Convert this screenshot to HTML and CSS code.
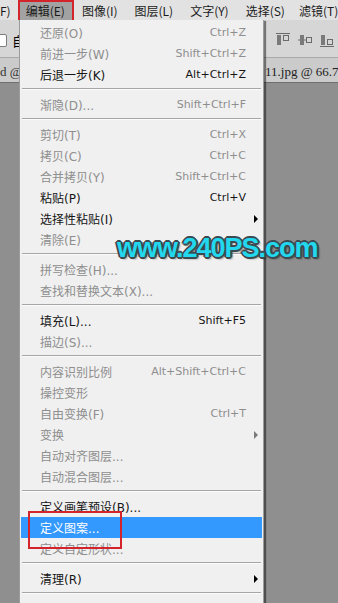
FILE: index.html
```html
<!DOCTYPE html>
<html lang="zh-CN">
<head>
  <meta charset="UTF-8">
  <meta name="viewport" content="width=device-width, initial-scale=1.0">
  <title>编辑菜单</title>
  <link rel="stylesheet" href="styles.css">
</head>
<body>
  <div class="app">
    <div class="menubar">
      <span class="mb-item mb-first">F)</span>
      <span class="mb-item mb-active">编辑(E)</span>
      <span class="mb-item">图像(I)</span>
      <span class="mb-item">图层(L)</span>
      <span class="mb-item">文字(Y)</span>
      <span class="mb-item">选择(S)</span>
      <span class="mb-item mb-last">滤镜(T)</span>
    </div>

    <div class="toolbar">
      <div class="tb-left">
        <span class="checkbox"></span>
        <span class="tb-label">自</span>
      </div>
      <div class="tb-right">
        <svg width="14" height="14" viewBox="0 0 14 14">
          <line x1="0" y1="0.5" x2="14" y2="0.5" stroke="#6a6a6a" />
          <rect x="1" y="2" width="4" height="10" fill="#7a7a7a" />
          <rect x="7.5" y="2.5" width="5" height="5" fill="none" stroke="#6a6a6a" />
        </svg>
        <svg width="14" height="14" viewBox="0 0 14 14">
          <line x1="0" y1="7" x2="14" y2="7" stroke="#6a6a6a" />
          <rect x="2" y="2" width="4" height="10" fill="#7a7a7a" />
          <rect x="8.5" y="4.5" width="5" height="5" fill="#d6d6d6" stroke="#6a6a6a" />
        </svg>
        <svg width="14" height="14" viewBox="0 0 14 14">
          <line x1="0" y1="13.5" x2="14" y2="13.5" stroke="#6a6a6a" />
          <rect x="1" y="2" width="4" height="10" fill="#7a7a7a" />
          <rect x="7.5" y="6.5" width="5" height="5" fill="none" stroke="#6a6a6a" />
        </svg>
      </div>
    </div>

    <div class="tabs">
      <span class="tab-left">d @</span>
      <span class="tab-right">11.jpg @ 66.7%</span>
    </div>

    <div class="canvas"></div>
  </div>

  <!-- edit menu dropdown -->
  <div class="dropdown">
    <div class="item off"><span class="label">还原(O)</span><span class="key">Ctrl+Z</span></div>
    <div class="item off"><span class="label">前进一步(W)</span><span class="key">Shift+Ctrl+Z</span></div>
    <div class="item"><span class="label">后退一步(K)</span><span class="key">Alt+Ctrl+Z</span></div>
    <div class="sep"></div>
    <div class="item off"><span class="label">渐隐(D)...</span><span class="key">Shift+Ctrl+F</span></div>
    <div class="sep"></div>
    <div class="item off"><span class="label">剪切(T)</span><span class="key">Ctrl+X</span></div>
    <div class="item off"><span class="label">拷贝(C)</span><span class="key">Ctrl+C</span></div>
    <div class="item off"><span class="label">合并拷贝(Y)</span><span class="key">Shift+Ctrl+C</span></div>
    <div class="item"><span class="label">粘贴(P)</span><span class="key">Ctrl+V</span></div>
    <div class="item sub"><span class="label">选择性粘贴(I)</span></div>
    <div class="item off"><span class="label">清除(E)</span></div>
    <div class="sep"></div>
    <div class="item off"><span class="label">拼写检查(H)...</span></div>
    <div class="item off"><span class="label">查找和替换文本(X)...</span></div>
    <div class="sep"></div>
    <div class="item"><span class="label">填充(L)...</span><span class="key">Shift+F5</span></div>
    <div class="item off"><span class="label">描边(S)...</span></div>
    <div class="sep"></div>
    <div class="item off"><span class="label">内容识别比例</span><span class="key">Alt+Shift+Ctrl+C</span></div>
    <div class="item off"><span class="label">操控变形</span></div>
    <div class="item off"><span class="label">自由变换(F)</span><span class="key">Ctrl+T</span></div>
    <div class="item off sub"><span class="label">变换</span></div>
    <div class="item off"><span class="label">自动对齐图层...</span></div>
    <div class="item off"><span class="label">自动混合图层...</span></div>
    <div class="sep"></div>
    <div class="item"><span class="label">定义画笔预设(B)...</span></div>
    <div class="item hl"><span class="label">定义图案...</span></div>
    <div class="item off"><span class="label">定义自定形状...</span></div>
    <div class="sep"></div>
    <div class="item sub"><span class="label">清理(R)</span></div>
    <div class="sep"></div>
  </div>

  <div class="watermark">www.240PS.com</div>
</body>
</html>
```

FILE: styles.css
```css
* {
  box-sizing: border-box;
  margin: 0;
  padding: 0;
}

body, html {
  width: 338px;
  height: 603px;
  overflow: hidden;
}

body {
  position: relative;
  font-family: "DejaVu Sans", "Noto Sans CJK SC", sans-serif;
  font-size: 12px;
  color: #000;
  background: #8f8f8f;
}

.app {
  display: flex;
  flex-direction: column;
  height: 100%;
}

/* top menu bar */
.menubar {
  display: flex;
  height: 20px;
  background: #e2e2e2;
  font-family: "Noto Sans CJK SC", sans-serif;
  white-space: nowrap;
  overflow: hidden;
}

.mb-item {
  display: flex;
  align-items: center;
  padding: 0 9px 0 8px;
  color: #1a1a1a;
}

.mb-first {
  padding: 0 7px 0 0;
}

.mb-last {
  padding-left: 5px;
}

.mb-active {
  position: relative;
  background: #a2a2a2;
}

.mb-active::after {
  content: "";
  position: absolute;
  left: 0;
  top: 0;
  right: 0;
  height: 22px;
  border: 2px solid #d3232b;
}

/* options bar */
.toolbar {
  display: flex;
  justify-content: space-between;
  align-items: center;
  height: 38px;
  padding: 3px 4px 0 0;
  background: #d6d6d6;
  border-bottom: 1px solid #a9a9a9;
}

.tb-left {
  display: flex;
  align-items: center;
  gap: 5px;
}

.checkbox {
  width: 13px;
  height: 13px;
  margin-left: -6px;
  background: #fff;
  border: 1px solid #7d7d7d;
  border-radius: 2px;
}

.tb-label {
  font-family: "Noto Sans CJK SC", sans-serif;
  font-size: 13px;
}

.tb-right {
  display: flex;
  align-items: center;
  gap: 8px;
}

.tb-right svg {
  display: block;
}

/* document tabs */
.tabs {
  display: flex;
  justify-content: space-between;
  align-items: center;
  height: 25px;
  padding-top: 3px;
  background: #cbcbcb;
  border-bottom: 1px solid #6f6f6f;
  font-family: "Liberation Serif", serif;
  font-size: 13px;
  white-space: nowrap;
  overflow: hidden;
}

.tab-left {
  color: #333;
}

.tab-right {
  width: 73px;
  color: #222;
}

.canvas {
  flex: 1;
  background: #8f8f8f;
}

/* dropdown */
.dropdown {
  position: absolute;
  left: 19px;
  top: 20px;
  width: 245px;
  height: 600px;
  padding-top: 2px;
  background: #f0f0f0;
  border-left: 1px solid #9c9c9c;
  border-right: 1px solid #9c9c9c;
  box-shadow: 2px 1px 1px rgba(0, 0, 0, 0.45);
}

.item {
  display: flex;
  align-items: center;
  height: 21px;
  margin: 0 1px;
  padding: 0 16px 0 19px;
  white-space: nowrap;
  color: #151515;
}

.item.off {
  color: #8e8e8e;
}

.item .key {
  margin-left: auto;
  font-size: 11px;
}

.item.sub::after {
  content: "";
  margin: 0 -12px 0 auto;
  border-left: 4px solid #000;
  border-top: 4px solid transparent;
  border-bottom: 4px solid transparent;
}

.item.off.sub::after {
  border-left-color: #7a7a7a;
}

.item.hl {
  position: relative;
  background: #3399ff;
  color: #fff;
}

.item.hl::before {
  content: "";
  position: absolute;
  left: 7px;
  top: -6px;
  width: 90px;
  height: 34px;
  border: 2px solid #d3232b;
}

.sep {
  margin: 3px 2px 4px;
  border-top: 1px solid #a6a6a6;
  border-bottom: 1px solid #fbfbfb;
}

/* watermark */
.watermark {
  position: absolute;
  left: 117px;
  top: 233px;
  font-family: "Liberation Sans", sans-serif;
  font-weight: bold;
  font-size: 27px;
  letter-spacing: -1px;
  color: #22d8ee;
  text-shadow:
    1px 1px 0 #3b4a50, -1px -1px 0 #3b4a50, 1px -1px 0 #3b4a50, -1px 1px 0 #3b4a50,
    2px 0 0 #3b4a50, -2px 0 0 #3b4a50, 0 2px 0 #3b4a50, 0 -2px 0 #3b4a50,
    2px 2px 2px rgba(0, 0, 0, 0.5);
}
```
